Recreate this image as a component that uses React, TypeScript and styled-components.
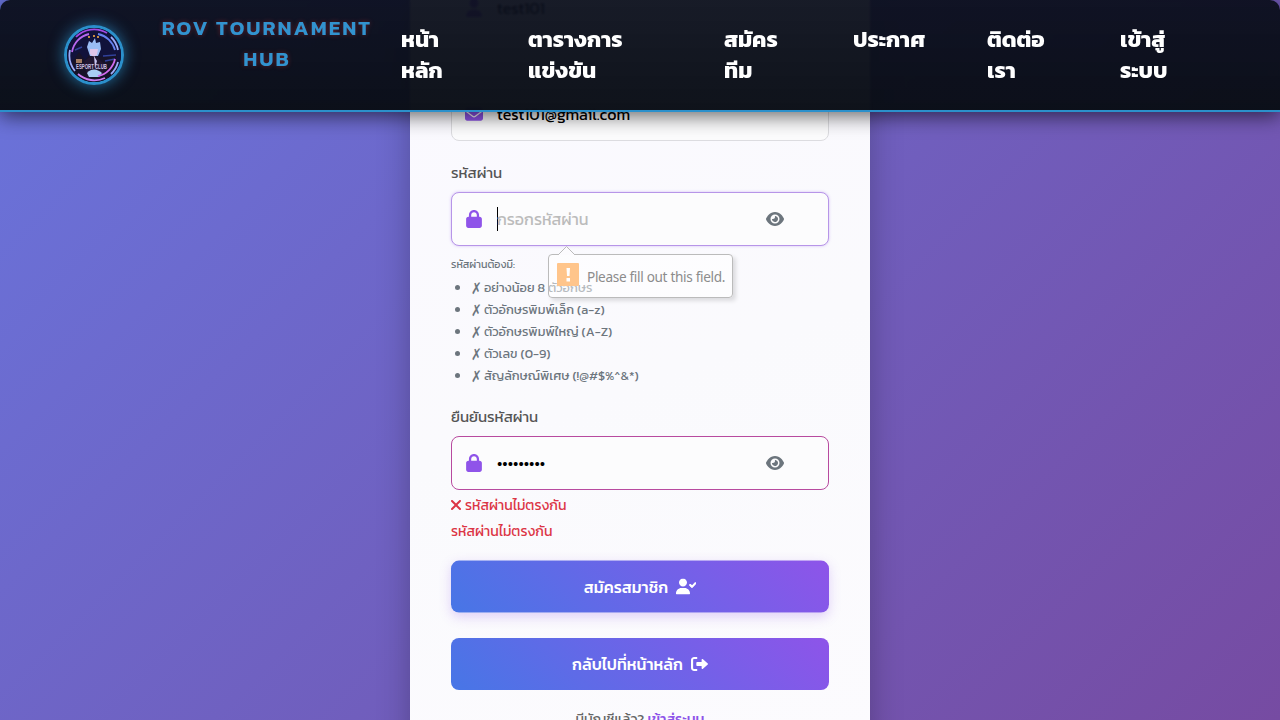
import React from "react";
import styled, { createGlobalStyle } from "styled-components";
import { FaLock, FaEye, FaEnvelope, FaUser } from "react-icons/fa6";

const thai = `"Kanit", sans-serif`;

const Global = createGlobalStyle`
  * { box-sizing: border-box; }
  body { margin: 0; font-family: ${thai}; overflow: hidden; }
`;

const Page = styled.div`
  height: 720px;
  overflow: hidden;
  display: flex;
  justify-content: center;
  align-items: flex-start;
  background: linear-gradient(135deg, #667eea 0%, #764ba2 100%) 0 100% / 1280px 1200px no-repeat;
`;

const Header = styled.header`
  position: fixed;
  inset: 0 0 auto 0;
  z-index: 10;
  height: 112px;
  display: flex;
  align-items: flex-start;
  padding: 12px 64px 0;
  border-bottom: 2px solid #2b90cb;
  border-radius: 10px 10px 0 0;
  background: linear-gradient(180deg, rgba(11, 15, 28, 0.95), rgba(10, 14, 22, 0.98));
  backdrop-filter: blur(1px);
  box-shadow: 0 4px 20px rgba(0, 0, 0, 0.6);
`;

const Logo = styled.div`
  width: 60px;
  height: 60px;
  flex: none;
  margin-top: 13px;
  border: 3px solid #2b90cb;
  border-radius: 50%;
  overflow: hidden;
  box-shadow: 0 0 15px rgba(43, 144, 203, 0.75);
  svg { display: block; }
`;

const Brand = styled.div`
  width: 216px;
  flex: none;
  margin-left: 35px;
  text-align: center;
  font: 600 20.8px/31px ${thai};
  letter-spacing: 2px;
  color: #3293cf;
  text-shadow: 0 0 5px rgba(220, 50, 50, 0.4);
`;

const Nav = styled.nav`
  display: grid;
  grid-template-columns: 127px 196px 129px 134px 133px 100px;
  margin: 12px 0 0 26px;
`;

const NavLink = styled.a`
  font-size: 22.4px;
  font-weight: 700;
  line-height: 31px;
  color: #fff;
  white-space: pre;
`;

const Card = styled.main`
  width: 460px;
  height: 760px;
  flex: none;
  padding: 0 41px;
  background: linear-gradient(160deg, #faf9ff, #fafafd 50%, #fcfbfe);
  box-shadow: 0 10px 30px rgba(0, 0, 0, 0.25);
`;

const Field = styled.div<{ $top?: number; $h?: number; $border?: string; $glow?: boolean }>`
  height: ${(p) => p.$h ?? 54}px;
  margin-top: ${(p) => p.$top ?? 0}px;
  display: flex;
  align-items: center;
  padding: 0 44px 0 13px;
  border: 1px solid ${(p) => p.$border ?? "#dcdce0"};
  border-radius: 8px;
  background: #fcfcfd;
  box-shadow: ${(p) => (p.$glow ? "0 0 3px rgba(143,84,233,.35)" : "none")};
  color: #8f54e9;
  svg { flex: none; }
`;

const Value = styled.span<{ $color?: string }>`
  flex: 1;
  margin-left: 14px;
  font-size: 16px;
  color: ${(p) => p.$color ?? "#000"};
  white-space: nowrap;
`;

const Caret = styled.i`
  width: 1px;
  height: 24px;
  margin: 0 -15px 0 14px;
  background: #000;
`;

const Label = styled.label<{ $top: number }>`
  display: block;
  height: 24px;
  margin-top: ${(p) => p.$top}px;
  font-size: 15px;
  line-height: 24px;
  color: #555;
`;

const Hint = styled.p`
  margin: 8px 0 0;
  font-size: 10.7px;
  line-height: 20px;
  color: #6c757d;
`;

const Rules = styled.ul`
  margin: 3px 0 0;
  padding-left: 20px;
  font-size: 12.8px;
  line-height: 22px;
  color: #6c757d;
`;

const Rule = styled.li`
  height: 22px;
  white-space: nowrap;
`;

const Cross = styled.span`
  display: inline-block;
  width: 10px;
  font: 12.8px/20px "DejaVu Sans", sans-serif;
  transform: translateY(1px) scaleY(1.25);
`;

const ErrorLine = styled.p<{ $top: number }>`
  display: flex;
  align-items: center;
  gap: 4px;
  height: 22px;
  margin: ${(p) => p.$top}px 0 0;
  font-size: 14px;
  line-height: 22px;
  color: #dc3545;
  svg { margin-bottom: 2px; }
`;

const Button = styled.button<{ $top: number; $raised?: boolean }>`
  display: flex;
  width: 100%;
  height: 52px;
  margin-top: ${(p) => p.$top}px;
  align-items: center;
  justify-content: center;
  gap: 8px;
  border: 0;
  border-radius: 8px;
  background: linear-gradient(45deg, #4776e6, #8e54e9);
  box-shadow: ${(p) => (p.$raised ? "0 4px 12px rgba(142,84,233,.25)" : "none")};
  transform: ${(p) => (p.$raised ? "translateY(-0.4px)" : "none")};
  font: 500 16px/24px ${thai};
  color: #fff;
`;

const Footer = styled.p`
  margin: 18px 0 0;
  text-align: center;
  font-size: 14px;
  line-height: 24px;
  color: #666;
  b { font-weight: 500; color: #8e54e9; }
`;

const Bubble = styled.div`
  position: absolute;
  left: 548px;
  top: 254px;
  width: 185px;
  height: 44px;
  display: flex;
  align-items: center;
  gap: 8px;
  padding-left: 8px;
  border: 1px solid #bbb;
  border-radius: 4px;
  background: rgba(255, 255, 255, 0.5);
  box-shadow: 3px 3px 4px rgba(0, 0, 0, 0.12);
  font: 13.6px "Noto Sans", sans-serif;
  letter-spacing: -0.32px;
  color: #8c8c8c;
  white-space: nowrap;
`;

const BubbleTip = styled.svg`
  position: absolute;
  left: 8px;
  top: -9px;
`;

const BubbleIcon = styled.svg`
  flex: none;
  margin-top: -4px;
`;

const UserCheck = () => (
  <svg width="20" height="16" viewBox="0 0 640 512" fill="currentColor">
    <path d="M274.7 304H173.3C77.61 304 0 381.6 0 477.3C0 496.5 15.52 512 34.66 512h378.7C432.5 512 448 496.5 448 477.3C448 381.6 370.4 304 274.7 304zM224 256c70.7 0 128-57.31 128-128S294.7 0 224 0C153.3 0 96 57.31 96 128S153.3 256 224 256zM632.3 134.4c-9.703-9-24.91-8.453-33.92 1.266l-87.05 93.75l-38.39-38.39c-9.375-9.375-24.56-9.375-33.94 0s-9.375 24.56 0 33.94l56 56C499.5 285.5 505.6 288 512 288h.4375c6.531-.125 12.72-2.891 17.16-7.672l104-112C642.6 158.6 642 143.4 632.3 134.4z" />
    <path d="M456 208L512 264L616 152" fill="none" stroke="currentColor" strokeWidth="66" strokeLinecap="round" strokeLinejoin="round" />
  </svg>
);

const Exit = () => (
  <svg width="17" height="16" viewBox="0 0 512 512" preserveAspectRatio="none" fill="currentColor">
    <path d="M96 480h64C177.7 480 192 465.7 192 448S177.7 416 160 416H96c-17.67 0-32-14.33-32-32V128c0-17.67 14.33-32 32-32h64C177.7 96 192 81.67 192 64S177.7 32 160 32H96C42.98 32 0 74.98 0 128v256C0 437 42.98 480 96 480zM504.8 238.5l-144.1-136c-6.975-6.578-17.2-8.375-26-4.594c-8.803 3.797-14.51 12.47-14.51 22.05l-.0918 72l-128-.001c-17.69 0-32.02 14.33-32.02 32v64c0 17.67 14.34 32 32.02 32l128 .001l.0918 71.1c0 9.578 5.707 18.25 14.51 22.05c8.803 3.781 19.03 1.984 26-4.594l144.1-136C514.4 264.4 514.4 247.6 504.8 238.5z" />
  </svg>
);

const XMark = () => (
  <svg width="10" height="16" viewBox="0 0 320 512" fill="currentColor">
    <path d="M310.6 361.4c12.5 12.5 12.5 32.75 0 45.25C304.4 412.9 296.2 416 288 416s-16.38-3.125-22.62-9.375L160 301.3L54.63 406.6C48.38 412.9 40.19 416 32 416S15.63 412.9 9.375 406.6c-12.5-12.5-12.5-32.75 0-45.25l105.4-105.4L9.375 150.6c-12.5-12.5-12.5-32.75 0-45.25s32.75-12.5 45.25 0L160 210.8l105.4-105.4c12.5-12.5 32.75-12.5 45.25 0s12.5 32.75 0 45.25l-105.4 105.4L310.6 361.4z" />
  </svg>
);

const LogoArt = () => (
  <svg width="54" height="54" viewBox="0 0 54 54">
    <rect width="54" height="54" fill="#11123b" />
    <path d="M4 36L12 24L18 32L22 27L36 29L50 26V54H4Z" fill="#171329" />
    <path d="M36 28L49 27M8 22L15 19M38 33L48 31" stroke="#31419a" strokeWidth="1.5" />
    <path d="M20 19l2-6 3 2 3-5 1 5 4-1 1 7-3 7h-8z" fill="#9abcf4" />
    <path d="M23 21h8l-1 6-4 2-3-3z" fill="#dfc5e9" />
    <path d="M17 33l8-5 5 1 8 8-2 9-16 3z" fill="#211631" />
    <path d="M27 28l3 5-2 7z" fill="#c9c4ee" />
    <path d="M20 45c5-5 10-4 15 0l-3 4H22z" fill="#a9cdf5" />
    <g fill="none" strokeWidth="1.8">
      <path d="M9 9A25 25 0 0 1 40 5" stroke="#a34be3" />
      <path d="M44 9A25 25 0 0 1 51 22M3 22A25 25 0 0 0 8 43M51 34A25 25 0 0 1 44 46" stroke="#9cabf8" />
      <path d="M11 46A25 25 0 0 0 38 50" stroke="#cc7cf1" />
      <path d="M5 24A22 22 0 0 1 22 6" stroke="#b767ee" />
      <path d="M31 6A22 22 0 0 1 48 22" stroke="#6681ef" />
      <path d="M48 31A22 22 0 0 1 31 48" stroke="#d06bef" />
    </g>
    <path d="M21 9h2M26 8h2M30 9h2" stroke="#c68a42" strokeWidth="2" />
    <path d="M9 31h6v4H9z" fill="#a27b63" />
    <text x="9" y="41" textLength="31" lengthAdjust="spacingAndGlyphs" fontFamily="Liberation Sans" fontWeight="700" fontSize="6.5" fill="#cfc0e4">ESPORT CLUB</text>
  </svg>
);

const nav = ["หน้า\nหลัก", "ตารางการ\nแข่งขัน", "สมัคร\nทีม", "ประกาศ", "ติดต่อ\nเรา", "เข้าสู่\nระบบ"];
const rules = ["อย่างน้อย 8 ตัวอักษร", "ตัวอักษรพิมพ์เล็ก (a-z)", "ตัวอักษรพิมพ์ใหญ่ (A-Z)", "ตัวเลข (0-9)", "สัญลักษณ์พิเศษ (!@#$%^&*)"];

export default function App() {
  return (
    <Page>
      <Global />
      <Header>
        <Logo><LogoArt /></Logo>
        <Brand>ROV TOURNAMENT HUB</Brand>
        <Nav>{nav.map((t) => <NavLink key={t}>{t}</NavLink>)}</Nav>
      </Header>
      <Card>
        <Field $top={-19} $h={54} $border="#ececf2"><FaUser size={18} /><Value>test101</Value></Field>
        <Field $top={52}><FaEnvelope size={18} /><Value>test101@gmail.com</Value></Field>
        <Label $top={20}>รหัสผ่าน</Label>
        <Field $top={7} $border="#b795e8" $glow>
          <FaLock size={18} /><Caret /><Value $color="#bbb">กรอกรหัสผ่าน</Value><FaEye size={18} color="#6c757d" />
        </Field>
        <Hint>รหัสผ่านต้องมี:</Hint>
        <Rules>{rules.map((t) => <Rule key={t}><Cross>✗</Cross> {t}</Rule>)}</Rules>
        <Label $top={18}>ยืนยันรหัสผ่าน</Label>
        <Field $top={7} $border="#b84a9f">
          <FaLock size={18} /><Value>•••••••••</Value><FaEye size={18} color="#6c757d" />
        </Field>
        <ErrorLine $top={5}><XMark />รหัสผ่านไม่ตรงกัน</ErrorLine>
        <ErrorLine $top={4}>รหัสผ่านไม่ตรงกัน</ErrorLine>
        <Button $top={18} $raised>สมัครสมาชิก<UserCheck /></Button>
        <Button $top={25}>กลับไปที่หน้าหลัก<Exit /></Button>
        <Footer>มีบัญชีแล้ว? <b>เข้าสู่ระบบ</b></Footer>
      </Card>
      <Bubble>
        <BubbleTip width="20" height="10"><path d="M1 9L9.500 0.500L18 9" fill="#fcfbfe" stroke="#bbb" /></BubbleTip>
        <BubbleIcon width="22" height="23" viewBox="0 0 22 23"><rect width="22" height="23" rx="1" fill="#ffc58b" /><path d="M9.500 5h3.500l-.5 8h-2.500zM9.500 15h3.500v3.500h-3.500z" fill="#fff" /></BubbleIcon>
        <span>Please fill out this field.</span>
      </Bubble>
    </Page>
  );
}
